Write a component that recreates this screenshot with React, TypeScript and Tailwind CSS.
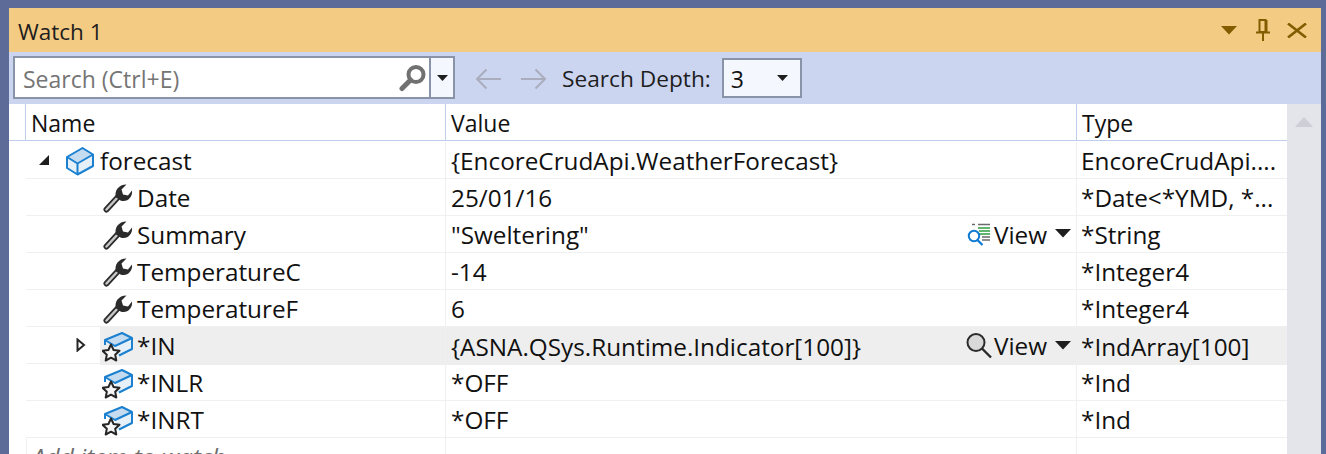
import type { ReactNode } from 'react';

const Caret = ({ className = 'fill-[#1e1e1e]' }: { className?: string }) => (
  <svg width="16" height="9" viewBox="0 0 16 9" className={className}>
    <path d="M0 0H16L8 8.5Z" />
  </svg>
);

const SmallCaret = () => (
  <svg width="11" height="6" viewBox="0 0 11 6" className="fill-[#1e1e1e]">
    <path d="M0 0H11L5.5 6Z" />
  </svg>
);

const BoxIcon = () => (
  <svg width="30" height="30" viewBox="0 0 30 30" fill="none">
    <path d="M2 11 17.5 2 28 8.5 12.5 17.5Z" fill="#c5dbef" />
    <path d="M12.5 17.5 28 8.5V20L12.5 28.5Z" fill="#e6f0f9" />
    <path d="M2 11V22L12.5 28.5V17.5Z" fill="#e6f0f9" />
    <path d="M2 11 17.5 2 28 8.5V20L12.5 28.5 2 22ZM2 11 12.5 17.5 28 8.5M12.5 17.5V28.5" stroke="#1b80cf" strokeWidth="2" strokeLinejoin="round" />
  </svg>
);

const StarBoxIcon = () => (
  <svg width="32" height="32" viewBox="0 0 32 32" fill="none">
    <path d="M3 10 20 3 30 8 13 16Z" fill="#c5dbef" />
    <path d="M13 16 30 8V19L14 27Z" fill="#e6f0f9" />
    <path d="M3 15V10L20 3 30 8V19L17 25.5M3 10 13 16 30 8" stroke="#1b80cf" strokeWidth="2" strokeLinejoin="round" />
    <path d="M9 14.5 11.6 20 17.5 20.8 13.2 24.8 14.3 30.5 9 27.7 3.7 30.5 4.8 24.8.5 20.8 6.4 20Z" fill="#f6f6f6" stroke="#262626" strokeWidth="2" strokeLinejoin="round" />
  </svg>
);

const WrenchIcon = () => (
  <svg width="30" height="32" viewBox="0 0 30 32" fill="none">
    <path d="M3.5 27.5 15.5 14.5" stroke="#2b2b2b" strokeWidth="6" strokeLinecap="round" />
    <path d="M3.5 27.5 15.5 14.5" stroke="#c8c8c8" strokeWidth="2.5" strokeLinecap="round" />
    <path d="M13 15.5C11 9 15.5 2.5 23.5 2.5L18.5 7.5 20 12.5 25 13.5 29 8.5C30 15 24 21 17.5 18.5Z" fill="#2b2b2b" />
  </svg>
);

const SearchGlass = () => (
  <svg width="28" height="28" viewBox="0 0 28 28" fill="none">
    <circle cx="17" cy="10.5" r="7.5" stroke="#717171" strokeWidth="4" />
    <path d="M11.5 16 3 24.5" stroke="#717171" strokeWidth="5" strokeLinecap="round" />
  </svg>
);

const VisualizerIcon = () => (
  <svg width="24" height="24" viewBox="0 0 24 24" fill="none">
    <path d="M5 .5h3M11 .5h12" stroke="#6b6b6b" strokeWidth="1.4" transform="translate(0 1)" />
    <path d="M11 5h12M12 8h11M12 11h11" stroke="#2f9e3f" strokeWidth="1.6" />
    <path d="M15 14h8M15 17h8" stroke="#6b6b6b" strokeWidth="1.6" />
    <circle cx="7" cy="13" r="5.2" stroke="#0e7ad1" strokeWidth="2" />
    <path d="M10.5 17 15.5 22" stroke="#0e7ad1" strokeWidth="2.2" />
  </svg>
);

const PlainGlass = () => (
  <svg width="28" height="28" viewBox="0 0 28 28" fill="none">
    <circle cx="11" cy="10.5" r="8.5" fill="#d9d9d9" stroke="#2b2b2b" strokeWidth="2" />
    <path d="M17 16.5 26 25.5" stroke="#2b2b2b" strokeWidth="2.4" />
  </svg>
);

const ArrowIcon = ({ flip }: { flip?: boolean }) => (
  <svg width="26" height="22" viewBox="0 0 26 22" fill="none" className={flip ? 'rotate-180' : ''}>
    <path d="M26 11H2M11.5 1.5 2 11l9.5 9.5" stroke="#a9adbd" strokeWidth="2" />
  </svg>
);

const ViewBtn = ({ icon }: { icon: ReactNode }) => (
  <div className="flex items-center ml-auto mr-[5px]">
    <span className="w-[28px] flex justify-center">{icon}</span>
    <span className="ml-[1px]">View</span>
    <span className="ml-[8px] mb-[2px]"><Caret /></span>
  </div>
);

type Row = {
  name: string;
  value: string;
  type: string;
  icon: ReactNode;
  indent: string;
  view?: ReactNode;
  expander?: 'open' | 'closed';
  selected?: boolean;
};

const rows: Row[] = [
  { name: 'forecast', value: '{EncoreCrudApi.WeatherForecast}', type: 'EncoreCrudApi....', icon: <BoxIcon />, indent: 'pl-[38px]', expander: 'open' },
  { name: 'Date', value: '25/01/16', type: '*Date<*YMD, *...', icon: <WrenchIcon />, indent: 'pl-[76px]' },
  { name: 'Summary', value: '"Sweltering"', type: '*String', icon: <WrenchIcon />, indent: 'pl-[76px]', view: <VisualizerIcon /> },
  { name: 'TemperatureC', value: '-14', type: '*Integer4', icon: <WrenchIcon />, indent: 'pl-[76px]' },
  { name: 'TemperatureF', value: '6', type: '*Integer4', icon: <WrenchIcon />, indent: 'pl-[76px]' },
  { name: '*IN', value: '{ASNA.QSys.Runtime.Indicator[100]}', type: '*IndArray[100]', icon: <StarBoxIcon />, indent: 'pl-[76px]', view: <PlainGlass />, expander: 'closed', selected: true },
  { name: '*INLR', value: '*OFF', type: '*Ind', icon: <StarBoxIcon />, indent: 'pl-[76px]' },
  { name: '*INRT', value: '*OFF', type: '*Ind', icon: <StarBoxIcon />, indent: 'pl-[76px]' },
];

const WatchRow = ({ row }: { row: Row }) => (
  <div className="grid grid-cols-[420px_631px_1fr] h-[37px] border-b border-[#f0f0f0] ml-[17px]">
    <div className={`relative flex items-center border-r border-[#f0f0f0] ${row.indent}`}>
      {row.selected && <div className="absolute left-[74px] right-0 top-0 bottom-[-1px] bg-[#eeeeee]" />}
      {row.expander === 'open' && (
        <svg width="12" height="12" viewBox="0 0 12 12" className="absolute left-[12px] top-[12px] fill-[#1e1e1e]">
          <path d="M11 1V11H1Z" />
        </svg>
      )}
      {row.expander === 'closed' && (
        <svg width="10" height="14" viewBox="0 0 10 14" fill="none" className="absolute left-[50px] top-[11px] stroke-[#262626]">
          <path d="M1.5 1.5V12.5L8 7Z" strokeWidth="2" />
        </svg>
      )}
      <span className="relative w-[32px] flex justify-center">{row.icon}</span>
      <span className={`relative pt-[1px] ${row.expander === 'open' ? 'ml-[4px]' : 'ml-[3px]'}`}>{row.name}</span>
    </div>
    <div className={`flex items-center pl-[5px] border-r border-[#f0f0f0] ${row.selected ? 'bg-[#eeeeee] mb-[-1px]' : ''}`}>
      <span className="pt-[1px]">{row.value}</span>
      {row.view && <ViewBtn icon={row.view} />}
    </div>
    <div className={`flex items-center pl-[4px] pt-[1px] whitespace-nowrap overflow-hidden ${row.selected ? 'bg-[#eeeeee] mb-[-1px]' : ''}`}>
      {row.type}
    </div>
  </div>
);

export default function App() {
  return (
    <div className="h-[454px] overflow-hidden bg-[#5d6b99] pt-[8px] pl-[9px] pr-[5px] font-['Open_Sans','Noto_Sans',sans-serif] text-[23px] text-[#111111]">
      {/* Title bar */}
      <div className="h-[44px] bg-[#f3cb83] flex items-center pl-[9px] pr-[14px]">
        <span className="text-[#1e1e1e] text-[22.5px] pt-[3px]">Watch 1</span>
        <div className="ml-auto flex items-center">
          <Caret className="fill-[#835c00]" />
          <svg width="14" height="22" viewBox="0 0 14 22" fill="none" stroke="#835c00" className="ml-[19px]">
            <path d="M3.5 1H9.5V13H3.5Z" strokeWidth="2" />
            <path d="M10.5 1V13" strokeWidth="2" />
            <path d="M0 13.5H14M7 14V22" strokeWidth="2" />
          </svg>
          <svg width="20" height="15" viewBox="0 0 20 15" fill="none" stroke="#835c00" strokeWidth="2.6" className="ml-[17px]">
            <path d="M1 .5 19 14.5M19 .5 1 14.5" />
          </svg>
        </div>
      </div>

      {/* Toolbar */}
      <div className="h-[52px] bg-[#ccd5f0] flex items-start pl-[4px] pt-[4px]">
        <div className="w-[442px] h-[43px] flex border-2 border-[#8a94a8] bg-white">
          <div className="flex-1 flex items-center pl-[8px] text-[#757575]">
            <span className="pt-[3px]">Search (Ctrl+E)</span>
            <span className="ml-auto mr-[2px]"><SearchGlass /></span>
          </div>
          <div className="w-[24px] flex items-center justify-center border-l-2 border-[#8a94a8] bg-[#f5f7ff]">
            <SmallCaret />
          </div>
        </div>
        <div className="ml-[20px] mt-[12px] flex items-center gap-[20px]">
          <ArrowIcon />
          <ArrowIcon flip />
        </div>
        <span className="ml-[15px] mt-[6px] text-[22.7px] text-[#1e1e1e]">Search Depth:</span>
        <div className="ml-[11px] mt-[2px] w-[80px] h-[40px] flex items-center border-2 border-[#8a94a8] bg-[#f5f7ff] pl-[7px] pr-[12px]">
          <span className="pt-[3px]">3</span>
          <span className="ml-auto"><SmallCaret /></span>
        </div>
      </div>

      {/* Table and scrollbar */}
      <div className="flex h-[400px]">
        <div className="flex-1 bg-white min-w-0">
          <div className="grid grid-cols-[17px_420px_631px_1fr] h-[37px] border-b border-[#bfcfea]">
            <div className="border-r border-[#bfcfea]" />
            <div className="flex items-center pl-[5px] pt-[2px] border-r border-[#bfcfea]">Name</div>
            <div className="flex items-center pl-[5px] pt-[2px] border-r border-[#bfcfea]">Value</div>
            <div className="flex items-center pl-[5px] pt-[2px]">Type</div>
          </div>
          <div className="mt-[1px] text-[24.3px]">
            {rows.map((row) => (
              <WatchRow key={row.name} row={row} />
            ))}
            <div className="grid grid-cols-[420px_631px_1fr] h-[37px] ml-[17px]">
              <div className="flex items-center pl-[5px] pt-[1px] border-l border-r border-[#f0f0f0] italic text-[#6d6d6d]">Add item to watch</div>
              <div className="border-r border-[#f0f0f0]" />
              <div />
            </div>
          </div>
        </div>
        <div className="w-[34px] bg-[#e4e5ea] flex justify-center pt-[13px]">
          <svg width="18" height="10" viewBox="0 0 18 10" className="fill-[#cdced6]">
            <path d="M9 0 18 10H0Z" />
          </svg>
        </div>
      </div>
    </div>
  );
}
